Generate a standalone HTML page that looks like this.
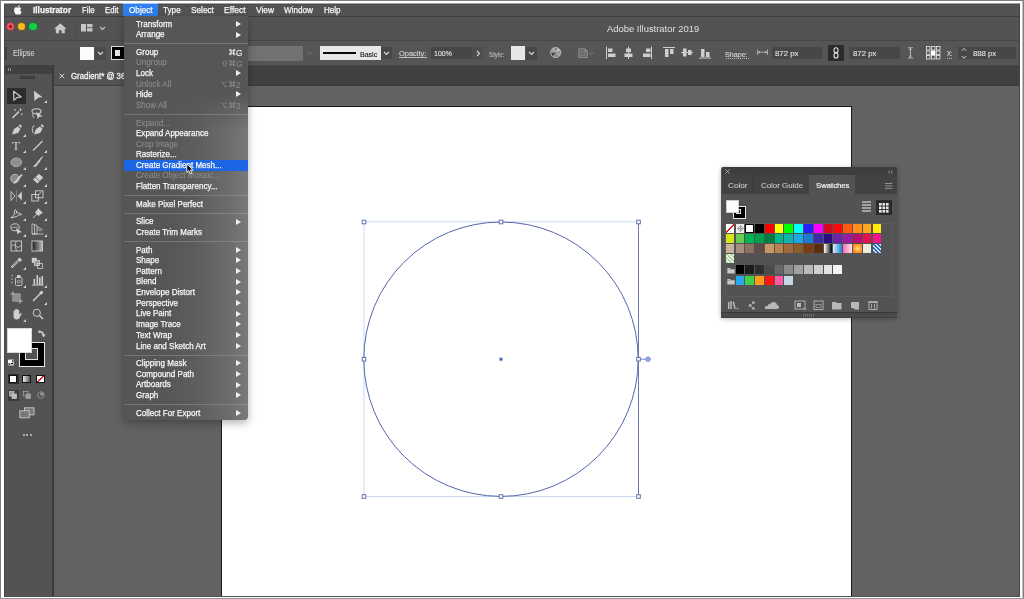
<!DOCTYPE html><html><head><meta charset="utf-8"><style>
*{box-sizing:border-box;margin:0;padding:0}
html,body{width:1024px;height:599px;overflow:hidden;background:#626262;font-family:"Liberation Sans",sans-serif;position:relative}
.a{position:absolute}
.t{position:absolute;white-space:nowrap;line-height:10px}
.mt{position:absolute;top:5px;font-size:8.4px;color:#f4f4f4;line-height:10px;white-space:nowrap;letter-spacing:-0.1px}
.mi{position:absolute;left:135.5px;font-size:8.3px;color:#f4f4f4;line-height:10px;white-space:nowrap;letter-spacing:-0.05px}
.mi.d{color:#8e8e8e}
.ar{position:absolute;left:236px;width:0;height:0;border-left:5px solid #f0f0f0;border-top:3px solid transparent;border-bottom:3px solid transparent}
.sc{position:absolute;right:782px;font-size:8px;line-height:10px;color:#f0f0f0;white-space:nowrap}
.sc.d{color:#8a8a8a}
.sep{position:absolute;left:124px;width:123.5px;height:1px;background:rgba(255,255,255,0.17)}
.sw{position:absolute;width:9px;height:9px}
svg{position:absolute;overflow:visible}
</style></head><body>
<div class="a" style="left:221px;top:106px;width:631px;height:493px;background:#fff;border-left:1px solid #1a1a1a;border-top:1px solid #1a1a1a;border-right:1px solid #1a1a1a"></div>
<svg style="left:0;top:0" width="1024" height="599">
<rect x="364" y="221.8" width="274.5" height="274.7" fill="none" stroke="#ccd9f0" stroke-width="1"/>
<line x1="638.5" y1="222" x2="638.5" y2="496.5" stroke="#6a78b8" stroke-width="1"/>
<circle cx="501" cy="359.2" r="137.2" fill="none" stroke="#5566b0" stroke-width="1"/>
<g fill="#fff" stroke="#6570b0" stroke-width="1">
<rect x="362.2" y="220.2" width="3.6" height="3.6"/><rect x="499.2" y="220.2" width="3.6" height="3.6"/><rect x="636.7" y="220.2" width="3.6" height="3.6"/>
<rect x="362.2" y="357.4" width="3.6" height="3.6"/><rect x="636.7" y="357.4" width="3.6" height="3.6"/>
<rect x="362.2" y="494.7" width="3.6" height="3.6"/><rect x="499.2" y="494.7" width="3.6" height="3.6"/><rect x="636.7" y="494.7" width="3.6" height="3.6"/>
</g>
<line x1="640.3" y1="359.2" x2="646" y2="359.2" stroke="#6a80d0" stroke-width="1"/>
<circle cx="648" cy="359.2" r="2.3" fill="#c8d4f8" stroke="#6a82d8" stroke-width="0.9"/><path d="M645.7 359.2 H650.3 M648 356.9 V361.5" stroke="#6a82d8" stroke-width="0.7"/>
<rect x="499.5" y="357.7" width="3" height="3" fill="#4a64c0"/>
</svg>
<div class="a" style="left:54px;top:65px;width:970px;height:21px;background:#404040;border-top:1px solid #474747;border-bottom:1px solid #3a3a3a"></div>
<div class="a" style="left:54px;top:65px;width:150px;height:20px;background:#535353"></div>
<div class="a" style="left:54px;top:85px;width:150px;height:1px;background:#434343"></div>
<svg style="left:59px;top:72.5px" width="6" height="6"><path d="M0.6 0.6 L5.2 5.2 M5.2 0.6 L0.6 5.2" stroke="#d8d8d8" stroke-width="1"/></svg>
<div class="t" style="left:70.80px;top:72.57px;font-size:8.2px;line-height:8.2px;color:#f2f2f2;transform-origin:0 0;transform:scaleX(0.960);-webkit-text-stroke:0.3px #f2f2f2;">Gradient* @ 36.65% (RGB/GPU Preview)</div>
<div class="a" style="left:4px;top:65px;width:48px;height:534px;background:#535353"></div>
<div class="a" style="left:4px;top:65px;width:48px;height:9px;background:#404040"></div>
<div class="a" style="left:52px;top:65px;width:2px;height:534px;background:#3b3b3b"></div>
<div class="a" style="left:8px;top:67.5px;width:0.8px;height:3.5px;background:#8a8a8a"></div><div class="a" style="left:10px;top:67.5px;width:0.8px;height:3.5px;background:#8a8a8a"></div>
<div class="a" style="left:20px;top:76px;width:14.5px;height:3px;border:0.8px solid #3a3a3a;background:repeating-linear-gradient(to right,#3a3a3a 0 1px,#505050 1px 2px)"></div>
<div class="a" style="left:7px;top:88px;width:19px;height:15.5px;background:#2d2d2d"></div>
<svg style="left:12px;top:90px" width="11" height="12"><path d="M1.6 1.3 L9.2 7 L5.3 7.4 L1.9 10.2 Z" fill="none" stroke="#cfcfcf" stroke-width="1.2" stroke-linejoin="round"/></svg>
<svg style="left:33px;top:90px" width="11" height="12"><path d="M1 0.8 L9.6 7.3 L5.5 7.6 L1.4 11 Z" fill="#cfcfcf"/></svg>
<svg style="left:44px;top:100px" width="3" height="3"><path d="M3 0V3H0Z" fill="#d0d0d0"/></svg>
<svg style="left:11px;top:108px" width="12" height="11"><path d="M1.5 10 L8 3.5" stroke="#cfcfcf" stroke-width="1.6"/><path d="M9.5 0.5v2.5M8.3 1.7h2.4M4 1v1.6M3.2 1.8h1.6M10.8 5.5v1.6M10 6.3h1.6" stroke="#cfcfcf" stroke-width="0.8"/></svg>
<svg style="left:31px;top:108px" width="13" height="11"><ellipse cx="5.5" cy="3.3" rx="4.5" ry="2.6" fill="none" stroke="#cfcfcf" stroke-width="1.1"/><path d="M5.2 3.8 L11.8 8.5 L8.5 8.7 L6.8 11 Z" fill="#cfcfcf"/><path d="M2 5.5 Q1 8 3 10" stroke="#cfcfcf" fill="none" stroke-width="0.9"/></svg>
<svg style="left:11px;top:124px" width="12" height="11"><path d="M1 10.5 L3 5 L7 2.5 L9.5 5 L7 9 Z" fill="#cfcfcf"/><path d="M7.5 1.5 L9 0.3 L11 2.3 L9.8 3.8Z" fill="#cfcfcf"/></svg>
<svg style="left:23px;top:134px" width="3" height="3"><path d="M3 0V3H0Z" fill="#d0d0d0"/></svg>
<svg style="left:31px;top:124px" width="13" height="11"><path d="M3 10.5 L5 5 L9 2.5 L11.5 5 L9 9 Z" fill="#cfcfcf"/><path d="M9.5 1.5 L11 0.3 L13 2.3 L11.8 3.8Z" fill="#cfcfcf"/><path d="M3 1 Q0 4 2 9" stroke="#cfcfcf" fill="none" stroke-width="0.9"/></svg>
<div class="t" style="left:11.5px;top:139px;font-family:'Liberation Serif',serif;font-size:13px;line-height:13px;color:#cfcfcf;will-change:transform">T</div>
<svg style="left:23px;top:150px" width="3" height="3"><path d="M3 0V3H0Z" fill="#d0d0d0"/></svg>
<svg style="left:32px;top:140px" width="11" height="11"><path d="M1 10.5 L10.5 1" stroke="#cfcfcf" stroke-width="1.2"/></svg>
<svg style="left:44px;top:150px" width="3" height="3"><path d="M3 0V3H0Z" fill="#d0d0d0"/></svg>
<svg style="left:10px;top:157px" width="13" height="11"><ellipse cx="6.3" cy="5.3" rx="5.3" ry="4.3" fill="#8e8e8e" stroke="#b5b5b5" stroke-width="0.9"/></svg>
<svg style="left:23px;top:167px" width="3" height="3"><path d="M3 0V3H0Z" fill="#d0d0d0"/></svg>
<svg style="left:32px;top:156px" width="11" height="12"><path d="M10.5 0.5 L5 6.5 L6.2 7.7 Z" fill="#cfcfcf" stroke="#cfcfcf" stroke-width="0.8"/><path d="M4.5 7 L6 8.5 Q4 11.5 0.8 11 Q2.5 9 4.5 7Z" fill="#cfcfcf"/></svg>
<svg style="left:44px;top:167px" width="3" height="3"><path d="M3 0V3H0Z" fill="#d0d0d0"/></svg>
<svg style="left:10px;top:173px" width="13" height="12"><circle cx="5" cy="5.5" r="4.2" fill="#8a8a8a" stroke="#bdbdbd" stroke-width="1"/><path d="M12 1.5 L4 10.5" stroke="#cfcfcf" stroke-width="1.8"/></svg>
<svg style="left:23px;top:184px" width="3" height="3"><path d="M3 0V3H0Z" fill="#d0d0d0"/></svg>
<svg style="left:32px;top:173px" width="12" height="11"><path d="M7 0.8 L11.2 4.5 L5.5 10.5 L1 6.6 Z" fill="#cfcfcf"/><path d="M3.2 4.3 L7.6 8.2" stroke="#535353" stroke-width="0.8"/></svg>
<svg style="left:44px;top:184px" width="3" height="3"><path d="M3 0V3H0Z" fill="#d0d0d0"/></svg>
<svg style="left:10px;top:190px" width="13" height="12"><path d="M1 1.5 L5 6 L1 10.5Z" fill="none" stroke="#cfcfcf" stroke-width="0.9"/><path d="M11.8 1.5 L7.8 6 L11.8 10.5Z" fill="#cfcfcf"/><path d="M6.4 0v12" stroke="#aaa" stroke-width="0.6"/></svg>
<svg style="left:23px;top:201px" width="3" height="3"><path d="M3 0V3H0Z" fill="#d0d0d0"/></svg>
<svg style="left:31px;top:190px" width="13" height="12"><rect x="4.5" y="0.8" width="7.5" height="7" fill="none" stroke="#cfcfcf" stroke-width="0.9"/><rect x="0.8" y="4.5" width="6.5" height="6.5" fill="none" stroke="#cfcfcf" stroke-width="0.9"/><path d="M7 5 L10.5 2" stroke="#cfcfcf" stroke-width="0.9"/></svg>
<svg style="left:44px;top:201px" width="3" height="3"><path d="M3 0V3H0Z" fill="#d0d0d0"/></svg>
<svg style="left:10px;top:207px" width="13" height="12"><path d="M1 11 Q3 8 5 7 Q3 4 5.5 2.5 Q7 4 6.5 6 Q9 5 11.5 7.5 Q8 8 6.5 9.5 Q4 10 1 11Z" fill="none" stroke="#cfcfcf" stroke-width="1"/></svg>
<svg style="left:23px;top:218px" width="3" height="3"><path d="M3 0V3H0Z" fill="#d0d0d0"/></svg>
<svg style="left:32px;top:207px" width="12" height="12"><path d="M6 1 L11 6 L9.5 6.5 L6.5 9 L5.5 8 L3 5.5 L5.5 2.5Z" fill="#cfcfcf"/><path d="M5 7 L1 11" stroke="#cfcfcf" stroke-width="0.9"/></svg>
<svg style="left:44px;top:218px" width="3" height="3"><path d="M3 0V3H0Z" fill="#d0d0d0"/></svg>
<svg style="left:10px;top:223px" width="13" height="12"><ellipse cx="5" cy="4.3" rx="4.3" ry="3.5" fill="none" stroke="#cfcfcf" stroke-width="0.9"/><path d="M1.5 4.5 L8.5 4" stroke="#cfcfcf" stroke-width="0.7"/><path d="M6 5 L12.2 9.3 L9.2 9.6 L7.6 11.8Z" fill="#cfcfcf"/></svg>
<svg style="left:23px;top:234px" width="3" height="3"><path d="M3 0V3H0Z" fill="#d0d0d0"/></svg>
<svg style="left:31px;top:223px" width="13" height="12"><path d="M1 0.8 L6 2.5 V11 H1Z M1 11 H12.5 M6 3.5 L12 7 M6 6 L10 8 M3.5 1.5 V11" fill="none" stroke="#cfcfcf" stroke-width="0.8"/></svg>
<svg style="left:44px;top:234px" width="3" height="3"><path d="M3 0V3H0Z" fill="#d0d0d0"/></svg>
<svg style="left:10px;top:240px" width="13" height="12"><rect x="1" y="1" width="10.5" height="10" fill="none" stroke="#cfcfcf" stroke-width="0.9"/><path d="M1 6 Q4 3 6 6 T11.5 5 M6 1 Q4 6 6.5 11" fill="none" stroke="#cfcfcf" stroke-width="0.8"/></svg>
<svg style="left:31px;top:240px" width="13" height="12"><defs><linearGradient id="gt" x1="0" x2="1"><stop offset="0" stop-color="#1a1a1a"/><stop offset="1" stop-color="#bdbdbd"/></linearGradient></defs><rect x="1" y="1" width="10.5" height="10" fill="url(#gt)" stroke="#cfcfcf" stroke-width="0.9"/></svg>
<svg style="left:10px;top:257px" width="13" height="12"><path d="M1.5 10.5 L8 4" stroke="#cfcfcf" stroke-width="2.2" fill="none"/><path d="M8.5 1.5 L11 4" stroke="#cfcfcf" stroke-width="3"/><path d="M2.5 9.5 L7.5 4.5" stroke="#535353" stroke-width="0.8"/></svg>
<svg style="left:23px;top:267px" width="3" height="3"><path d="M3 0V3H0Z" fill="#d0d0d0"/></svg>
<svg style="left:31px;top:257px" width="13" height="12"><rect x="0.8" y="0.8" width="5" height="5" fill="#cfcfcf"/><rect x="3.5" y="3.5" width="5" height="5" fill="#9a9a9a" stroke="#cfcfcf" stroke-width="0.8"/><rect x="6.5" y="6.5" width="5" height="5" fill="none" stroke="#cfcfcf" stroke-width="0.8"/></svg>
<svg style="left:10px;top:273px" width="13" height="13"><rect x="5.5" y="4.5" width="6.5" height="8" rx="1" fill="none" stroke="#cfcfcf" stroke-width="0.9"/><rect x="7" y="2" width="3.5" height="2.5" fill="#cfcfcf"/><path d="M1 2.5h2M2 1.5v2M1 6h2M2 5v2M1 9.5h2M2 8.5v2" stroke="#b0b0b0" stroke-width="0.6"/><circle cx="8.7" cy="8.7" r="1.5" fill="none" stroke="#cfcfcf" stroke-width="0.7"/></svg>
<svg style="left:23px;top:285px" width="3" height="3"><path d="M3 0V3H0Z" fill="#d0d0d0"/></svg>
<svg style="left:31px;top:273px" width="13" height="13"><path d="M1 12.2 H12.5" stroke="#cfcfcf" stroke-width="0.8"/><rect x="2.5" y="6" width="1.6" height="6" fill="#cfcfcf"/><rect x="5.5" y="2" width="1.6" height="10" fill="#cfcfcf"/><rect x="8" y="4.5" width="1.6" height="7.5" fill="#cfcfcf"/><rect x="10.5" y="3" width="1.6" height="9" fill="#cfcfcf"/></svg>
<svg style="left:44px;top:285px" width="3" height="3"><path d="M3 0V3H0Z" fill="#d0d0d0"/></svg>
<svg style="left:10px;top:291px" width="13" height="13"><path d="M3 0.5 V10 H12.5 M0.5 3 H10 V12.5" fill="none" stroke="#cfcfcf" stroke-width="0.9"/><rect x="3.5" y="3.5" width="6" height="6" fill="#8f8f8f"/></svg>
<svg style="left:32px;top:290px" width="12" height="12"><path d="M1 11 L8 4" stroke="#cfcfcf" stroke-width="1.5"/><path d="M7 3 L9.5 0.5 L11.5 2.5 L9 5Z" fill="#cfcfcf"/></svg>
<svg style="left:44px;top:302px" width="3" height="3"><path d="M3 0V3H0Z" fill="#d0d0d0"/></svg>
<svg style="left:11px;top:308px" width="12" height="12"><path d="M2.5 6 V3 Q3.2 2.2 3.8 3 V6 V1.5 Q4.5 0.8 5.2 1.5 V6 V1.2 Q6 0.5 6.7 1.2 V6 V2 Q7.5 1.3 8.2 2 V7 L9.5 5.2 Q10.5 4.8 10.8 5.6 L8.5 10 Q7.5 11.5 5.5 11.5 Q3 11.5 2.5 9Z" fill="#cfcfcf"/></svg>
<svg style="left:23px;top:319px" width="3" height="3"><path d="M3 0V3H0Z" fill="#d0d0d0"/></svg>
<svg style="left:32px;top:308px" width="12" height="12"><circle cx="4.8" cy="4.8" r="3.6" fill="none" stroke="#cfcfcf" stroke-width="1"/><path d="M7.5 7.5 L11 11" stroke="#cfcfcf" stroke-width="1.4"/></svg>
<div class="a" style="left:19px;top:341.5px;width:25.5px;height:25px;background:#000;border:1px solid #e8e8e8"></div>
<div class="a" style="left:25.3px;top:348px;width:12.5px;height:12px;background:#505050;border:1px solid #e0e0e0"></div>
<div class="a" style="left:7px;top:328px;width:24.5px;height:24.5px;background:#fff;border:1px solid #d8d8d8"></div>
<svg style="left:38px;top:329.5px" width="8" height="8"><path d="M1.2 1.8 Q5 1.5 5.6 5" fill="none" stroke="#cfcfcf" stroke-width="1.5"/><path d="M3.6 4.6 L5.6 7.4 L7.6 4.6Z" fill="#cfcfcf"/><circle cx="1.5" cy="1.8" r="1.3" fill="#cfcfcf"/></svg>
<div class="a" style="left:7.5px;top:358.6px;width:6.5px;height:7px;border:0.8px solid #999;border-radius:1px"></div><div class="a" style="left:9.5px;top:361.5px;width:4px;height:3.5px;background:#000;border:0.7px solid #ccc"></div><div class="a" style="left:8.3px;top:359.5px;width:3.4px;height:3.2px;background:#fff"></div>
<div class="a" style="left:7.5px;top:373.5px;width:11px;height:10px;background:#2f2f2f"></div>
<div class="a" style="left:9px;top:375px;width:8px;height:7.5px;background:#fff;border:1px solid #111"></div>
<div class="a" style="left:22.3px;top:375px;width:8.5px;height:7.5px;background:linear-gradient(to right,#f0f0f0,#555);border:1px solid #111"></div>
<div class="a" style="left:36.3px;top:375px;width:8.5px;height:7.5px;background:linear-gradient(135deg,#fff 40%,#e01a1a 40%,#e01a1a 60%,#fff 60%);border:1px solid #111"></div>
<div class="a" style="left:7.5px;top:389.5px;width:11px;height:11px;background:#3a3a3a"></div>
<svg style="left:9px;top:391px" width="8" height="8"><rect x="0.5" y="0.5" width="4.5" height="4.5" fill="#999" stroke="#ccc" stroke-width="0.7"/><rect x="3" y="3" width="4.5" height="4.5" fill="#bbb" stroke="#ccc" stroke-width="0.7"/></svg>
<svg style="left:23px;top:391px" width="8" height="8"><rect x="0.5" y="0.5" width="4.5" height="4.5" fill="none" stroke="#aaa" stroke-width="0.7"/><rect x="3" y="3" width="4.5" height="4.5" fill="#999" stroke="#aaa" stroke-width="0.7"/></svg>
<svg style="left:37px;top:391px" width="8" height="8"><circle cx="4" cy="4" r="3.3" fill="none" stroke="#999" stroke-width="0.8"/><rect x="3.3" y="1.5" width="3" height="3" fill="#999"/></svg>
<svg style="left:19px;top:407px" width="16" height="12"><rect x="5.5" y="0.8" width="9.5" height="7" fill="#777" stroke="#c8c8c8" stroke-width="0.9"/><rect x="0.8" y="3.8" width="9.5" height="7" fill="#777" stroke="#c8c8c8" stroke-width="0.9"/></svg>
<div class="a" style="left:22.5px;top:434px;width:2px;height:2px;background:#c8c8c8;border-radius:1px"></div><div class="a" style="left:26px;top:434px;width:2px;height:2px;background:#c8c8c8;border-radius:1px"></div><div class="a" style="left:29.5px;top:434px;width:2px;height:2px;background:#c8c8c8;border-radius:1px"></div>
<div class="a" style="left:0;top:40px;width:1024px;height:1px;background:#474747"></div>
<div class="a" style="left:0;top:41px;width:1024px;height:24px;background:#555555"></div>
<div class="a" style="left:5px;top:46.5px;width:2px;height:13px;background:repeating-linear-gradient(to bottom,#3a3a3a 0 1px,#464646 1px 2px)"></div>
<div class="t" style="left:12.70px;top:50.47px;font-size:8.2px;line-height:8.2px;color:#d0d0d0;transform-origin:0 0;transform:scaleX(0.891);-webkit-text-stroke:0.1px #d0d0d0;">Ellipse</div>
<div class="a" style="left:80px;top:46.5px;width:14px;height:13.5px;background:#fbfbfb"></div>
<div class="a" style="left:94.5px;top:47px;width:11px;height:13px;background:#4c4c4c"></div>
<svg style="left:96.5px;top:51px" width="7" height="5"><path d="M1 1 L3.5 3.5 L6 1" fill="none" stroke="#d8d8d8" stroke-width="1.1"/></svg>
<div class="a" style="left:110.5px;top:46.3px;width:14px;height:13.7px;background:#000;border:1px solid #e0e0e0"></div>
<div class="a" style="left:115px;top:50px;width:5px;height:5.5px;background:#e8e8e8"></div>
<div class="a" style="left:248px;top:45.8px;width:54.5px;height:15.2px;background:#727272"></div>
<svg style="left:305.5px;top:51px" width="7" height="5"><path d="M1 1 L3.5 3.5 L6 1" fill="none" stroke="#6e6e6e" stroke-width="1.1"/></svg>
<div class="a" style="left:320px;top:46px;width:60.6px;height:14px;background:#e8e8e8"></div>
<div class="a" style="left:323px;top:52px;width:33.2px;height:2px;background:#0a0a0a"></div>
<div class="t" style="left:359.80px;top:50.67px;font-size:7.5px;line-height:7.5px;color:#111;transform-origin:0 0;transform:scaleX(0.938);-webkit-text-stroke:0.1px #111;">Basic</div>
<div class="a" style="left:381px;top:46.8px;width:11.3px;height:12.7px;background:#474747"></div>
<svg style="left:383.3px;top:51px" width="7" height="5"><path d="M1 1 L3.5 3.5 L6 1" fill="none" stroke="#d8d8d8" stroke-width="1.1"/></svg>
<div class="t" style="left:398.80px;top:50.45px;font-size:7.7px;line-height:7.7px;color:#d8d8d8;transform-origin:0 0;transform:scaleX(0.972);-webkit-text-stroke:0.1px #d8d8d8;">Opacity:</div>
<div class="a" style="left:398.5px;top:57px;width:28px;height:0.8px;background:#bdbdbd"></div>
<div class="a" style="left:430.7px;top:47.4px;width:41px;height:11.6px;background:#474747"></div>
<div class="t" style="left:433.50px;top:50.45px;font-size:7.7px;line-height:7.7px;color:#e8e8e8;transform-origin:0 0;transform:scaleX(0.910);-webkit-text-stroke:0.1px #e8e8e8;">100%</div>
<div class="a" style="left:472px;top:47.4px;width:10.5px;height:11.6px;background:#4d4d4d"></div>
<svg style="left:475.5px;top:50px" width="5" height="7"><path d="M1 1 L3.5 3.5 L1 6" fill="none" stroke="#d8d8d8" stroke-width="1.1"/></svg>
<div class="t" style="left:488.70px;top:50.79px;font-size:7.4px;line-height:7.4px;color:#bdbdbd;transform-origin:0 0;transform:scaleX(0.839);-webkit-text-stroke:0.1px #bdbdbd;">Style:</div>
<div class="a" style="left:510.8px;top:46.2px;width:14.1px;height:13.7px;background:#e6e6e6"></div>
<div class="a" style="left:525.5px;top:47px;width:11.3px;height:13px;background:#474747"></div>
<svg style="left:527.7px;top:51px" width="7" height="5"><path d="M1 1 L3.5 3.5 L6 1" fill="none" stroke="#d8d8d8" stroke-width="1.1"/></svg>
<svg style="left:549.5px;top:47px" width="12" height="12"><circle cx="5.7" cy="5.5" r="5.1" fill="#8c8c8c" stroke="#bdbdbd" stroke-width="0.9"/><path d="M5.7 5.5 L2.5 9 L1.2 6.5Z" fill="#3a3a3a"/><path d="M5.7 5.5 L8 1.2 L10.3 3.5Z" fill="#c8c8c8"/><path d="M5.7 5.5 L10.6 6.5 L9 9.2Z" fill="#a8a8a8"/><path d="M5.7 5.5 L4 0.8 L1.5 3Z" fill="#b0b0b0"/></svg>
<svg style="left:578px;top:48px" width="17" height="11"><path d="M0.8 0.8 H7 L9.5 3.3 V9.5 H0.8Z" fill="#6a6a6a" stroke="#8e8e8e" stroke-width="0.9"/><path d="M7 0.8 V3.3 H9.5" fill="#9a9a9a" stroke="#8e8e8e" stroke-width="0.6"/><rect x="3" y="3.5" width="4" height="4" fill="none" stroke="#858585" stroke-width="0.7"/><path d="M11.5 4.6 L13.3 6.2 L15.1 4.6" fill="none" stroke="#8a8a8a" stroke-width="0.9"/></svg>
<svg style="left:605.4px;top:46px" width="110" height="14">
<path d="M1.5 0.5 V13" stroke="#cfcfcf" stroke-width="1"/><rect x="3" y="2.5" width="4.5" height="3.5" fill="#cfcfcf"/><rect x="3" y="7.5" width="7.5" height="3.5" fill="#cfcfcf"/>
<path d="M23.5 0.5 V13" stroke="#cfcfcf" stroke-width="1"/><rect x="21" y="2.5" width="5" height="3.5" fill="#cfcfcf"/><rect x="19.5" y="7.5" width="8" height="3.5" fill="#cfcfcf"/>
<path d="M46.5 0.5 V13" stroke="#cfcfcf" stroke-width="1"/><rect x="41" y="2.5" width="4.5" height="3.5" fill="#cfcfcf"/><rect x="38" y="7.5" width="7.5" height="3.5" fill="#cfcfcf"/>
<path d="M58 1.5 H70" stroke="#cfcfcf" stroke-width="1"/><rect x="60" y="3" width="3.5" height="8" fill="#cfcfcf"/><rect x="65" y="3" width="3.5" height="5" fill="#cfcfcf"/>
<path d="M76 6.5 H88" stroke="#cfcfcf" stroke-width="1"/><rect x="78" y="2.5" width="3.5" height="8" fill="#cfcfcf"/><rect x="83" y="4" width="3.5" height="5" fill="#cfcfcf"/>
<path d="M94 12 H106" stroke="#cfcfcf" stroke-width="1"/><rect x="96" y="3" width="3.5" height="8" fill="#cfcfcf"/><rect x="101" y="6" width="3.5" height="5" fill="#cfcfcf"/>
</svg>
<div class="t" style="left:725.40px;top:50.57px;font-size:7.5px;line-height:7.5px;color:#dcdcdc;transform-origin:0 0;transform:scaleX(0.950);-webkit-text-stroke:0.1px #dcdcdc;">Shape:</div>
<div class="a" style="left:725.5px;top:57.5px;width:23px;height:1px;background:repeating-linear-gradient(to right,#bbb 0 1px,transparent 1px 2px)"></div>
<svg style="left:757px;top:49px" width="11" height="7"><path d="M0.5 0.5 V6 M10.5 0.5 V6 M1 3.2 H10" stroke="#c0c0c0" stroke-width="0.8"/><path d="M1 3.2 L3 1.8 V4.6Z M10 3.2 L8 1.8 V4.6Z" fill="#c0c0c0"/></svg>
<div class="a" style="left:771.5px;top:47.4px;width:50.5px;height:11.6px;background:#474747"></div>
<div class="t" style="left:774.70px;top:49.99px;font-size:7.4px;line-height:7.4px;color:#e4e4e4;transform-origin:0 0;transform:scaleX(1.054);-webkit-text-stroke:0.1px #e4e4e4;">872 px</div>
<div class="a" style="left:828.3px;top:44.8px;width:15.7px;height:16.2px;background:#2b2b2b"></div>
<svg style="left:832px;top:47px" width="8" height="12"><rect x="2" y="0.8" width="4" height="5" rx="2" fill="none" stroke="#e6e6e6" stroke-width="1.1"/><rect x="2" y="6" width="4" height="5" rx="2" fill="none" stroke="#e6e6e6" stroke-width="1.1"/></svg>
<div class="a" style="left:849.4px;top:47.4px;width:50.8px;height:11.6px;background:#474747"></div>
<div class="t" style="left:852.50px;top:49.99px;font-size:7.4px;line-height:7.4px;color:#e4e4e4;transform-origin:0 0;transform:scaleX(1.054);-webkit-text-stroke:0.1px #e4e4e4;">872 px</div>
<svg style="left:907px;top:47px" width="7" height="12"><path d="M0.8 0.8 H6 M0.8 11 H6 M3.4 1 V10.8" stroke="#c0c0c0" stroke-width="0.9"/><path d="M3.4 1 L2 3 H4.8Z M3.4 10.8 L2 8.8 H4.8Z" fill="#c0c0c0"/></svg>
<svg style="left:925.5px;top:46px" width="15" height="14"><g fill="none" stroke="#e8e8e8" stroke-width="0.8"><rect x="0.5" y="0.5" width="3.5" height="3.5"/><rect x="5.5" y="0.5" width="3.5" height="3.5"/><rect x="10.5" y="0.5" width="3.5" height="3.5"/><rect x="0.5" y="5" width="3.5" height="3.5"/><rect x="10.5" y="5" width="3.5" height="3.5"/><rect x="0.5" y="9.5" width="3.5" height="3.5"/><rect x="5.5" y="9.5" width="3.5" height="3.5"/><rect x="10.5" y="9.5" width="3.5" height="3.5"/></g><rect x="5" y="4.5" width="4.5" height="4.5" fill="#fff"/></svg>
<div class="t" style="left:947.00px;top:50.30px;font-size:7.3px;line-height:7.3px;color:#e4e4e4;transform-origin:0 0;transform:scaleX(0.796);-webkit-text-stroke:0.1px #e4e4e4;">X:</div>
<div class="a" style="left:946.5px;top:57.5px;width:6px;height:1px;background:repeating-linear-gradient(to right,#bbb 0 1px,transparent 1px 2px)"></div>
<div class="a" style="left:958.4px;top:47.4px;width:57.6px;height:11.6px;background:#474747"></div>
<svg style="left:961px;top:47px" width="6" height="13"><path d="M0.8 3.8 L3 1.5 L5.2 3.8 M0.8 9 L3 11.3 L5.2 9" fill="none" stroke="#d8d8d8" stroke-width="0.9"/></svg>
<div class="t" style="left:972.80px;top:49.99px;font-size:7.4px;line-height:7.4px;color:#e4e4e4;transform-origin:0 0;transform:scaleX(1.045);-webkit-text-stroke:0.1px #e4e4e4;">888 px</div>
<div class="a" style="left:0;top:16px;width:1024px;height:1px;background:#3f3f3f"></div>
<div class="a" style="left:0;top:17px;width:1024px;height:23px;background:#535353"></div>
<div class="a" style="left:6.7px;top:22.7px;width:7.4px;height:7.4px;border-radius:50%;background:#ee5864;box-shadow:0 0 0 0.6px #b83040"></div><div class="a" style="left:8.9px;top:24.9px;width:3px;height:3px;border-radius:50%;background:#900a14"></div>
<div class="a" style="left:17.8px;top:22.7px;width:7.4px;height:7.4px;border-radius:50%;background:#f8bc1c;box-shadow:0 0 0 0.7px #8a6210"></div>
<div class="a" style="left:29.2px;top:22.7px;width:7.4px;height:7.4px;border-radius:50%;background:#14d048;box-shadow:0 0 0 0.7px #0e7a2a"></div>
<svg style="left:54px;top:23px" width="13" height="11"><path d="M6.3 0.3 L12.5 5.8 H10.8 V10.3 H7.6 V7.3 H5 V10.3 H1.8 V5.8 H0.1Z" fill="#c6c6c6"/></svg>
<div class="a" style="left:74.5px;top:20px;width:1px;height:17px;background:#4c4c4c"></div>
<svg style="left:81px;top:24px" width="12" height="8"><rect x="0" y="0" width="5" height="7.5" fill="#c6c6c6"/><rect x="6" y="0" width="5.5" height="3.3" fill="#c6c6c6"/><rect x="6" y="4.2" width="5.5" height="3.3" fill="#c6c6c6"/></svg>
<svg style="left:98.5px;top:25.5px" width="7" height="5"><path d="M1 1 L3.5 3.5 L6 1" fill="none" stroke="#c6c6c6" stroke-width="1.1"/></svg>
<div class="t" style="left:606.90px;top:23.84px;font-size:9.7px;line-height:9.7px;color:#dcdcdc;transform-origin:0 0;transform:scaleX(0.972);-webkit-text-stroke:0.05px #dcdcdc;">Adobe Illustrator 2019</div>
<div class="a" style="left:0;top:0;width:1024px;height:16px;background:#535353"></div>
<div class="a" style="left:123.2px;top:4px;width:34.8px;height:12px;background:#2c7ff0"></div>
<svg style="left:13.6px;top:4.8px" width="7.6" height="9.6" viewBox="2 0 20 24" preserveAspectRatio="none"><path d="M12.152 6.896c-.948 0-2.415-1.078-3.960-1.040-2.040.027-3.910 1.183-4.961 3.014-2.117 3.675-.546 9.103 1.519 12.090 1.013 1.454 2.208 3.090 3.792 3.039 1.520-.065 2.090-.987 3.935-.987 1.831 0 2.350.987 3.960.948 1.637-.026 2.676-1.480 3.676-2.948 1.156-1.688 1.636-3.325 1.662-3.415-.039-.013-3.182-1.221-3.220-4.857-.026-3.040 2.480-4.494 2.597-4.559-1.429-2.090-3.623-2.324-4.390-2.376-2-.156-3.675 1.090-4.610 1.090zM15.530 3.830c.843-1.012 1.400-2.427 1.245-3.830-1.207.052-2.662.805-3.532 1.818-.780.896-1.454 2.338-1.273 3.714 1.338.104 2.715-.688 3.559-1.701" fill="#fafafa"/></svg>
<div class="t" style="left:32.90px;top:6.07px;font-size:8.9px;line-height:8.9px;color:#f8f8f8;font-weight:bold;transform-origin:0 0;transform:scaleX(0.931);-webkit-text-stroke:0.25px #f8f8f8;">Illustrator</div>
<div class="t" style="left:81.70px;top:6.07px;font-size:8.9px;line-height:8.9px;color:#f8f8f8;transform-origin:0 0;transform:scaleX(0.887);-webkit-text-stroke:0.25px #f8f8f8;">File</div>
<div class="t" style="left:104.70px;top:6.07px;font-size:8.9px;line-height:8.9px;color:#f8f8f8;transform-origin:0 0;transform:scaleX(0.869);-webkit-text-stroke:0.25px #f8f8f8;">Edit</div>
<div class="t" style="left:129.20px;top:6.07px;font-size:8.9px;line-height:8.9px;color:#f8f8f8;transform-origin:0 0;transform:scaleX(0.920);-webkit-text-stroke:0.25px #f8f8f8;">Object</div>
<div class="t" style="left:163.00px;top:6.07px;font-size:8.9px;line-height:8.9px;color:#f8f8f8;transform-origin:0 0;transform:scaleX(0.919);-webkit-text-stroke:0.25px #f8f8f8;">Type</div>
<div class="t" style="left:190.90px;top:6.07px;font-size:8.9px;line-height:8.9px;color:#f8f8f8;transform-origin:0 0;transform:scaleX(0.928);-webkit-text-stroke:0.25px #f8f8f8;">Select</div>
<div class="t" style="left:224.40px;top:6.07px;font-size:8.9px;line-height:8.9px;color:#f8f8f8;transform-origin:0 0;transform:scaleX(0.959);-webkit-text-stroke:0.25px #f8f8f8;">Effect</div>
<div class="t" style="left:256.00px;top:6.07px;font-size:8.9px;line-height:8.9px;color:#f8f8f8;transform-origin:0 0;transform:scaleX(0.943);-webkit-text-stroke:0.25px #f8f8f8;">View</div>
<div class="t" style="left:284.00px;top:6.07px;font-size:8.9px;line-height:8.9px;color:#f8f8f8;transform-origin:0 0;transform:scaleX(0.918);-webkit-text-stroke:0.25px #f8f8f8;">Window</div>
<div class="t" style="left:323.50px;top:6.07px;font-size:8.9px;line-height:8.9px;color:#f8f8f8;transform-origin:0 0;transform:scaleX(0.903);-webkit-text-stroke:0.25px #f8f8f8;">Help</div>
<div class="a" style="left:124px;top:16px;width:124px;height:404px;background:#565656;border-radius:0 0 4px 4px;overflow:hidden;box-shadow:0 3px 8px rgba(0,0,0,0.3)"><div class="a" style="left:40px;top:75px;width:84px;height:329px;background:linear-gradient(to right,rgba(255,255,255,0) 0%,rgba(255,255,255,0.05) 40%,rgba(255,255,255,0.13) 75%,rgba(255,255,255,0.21) 100%);-webkit-mask-image:linear-gradient(to bottom,transparent 0,#000 40px)"></div></div>
<div class="a" style="left:124px;top:159.5px;width:123.5px;height:11.5px;background:#1c66e6"></div>
<div class="t" style="left:135.90px;top:19.79px;font-size:8.7px;line-height:8.7px;color:#f8f8f8;transform-origin:0 0;transform:scaleX(0.925);-webkit-text-stroke:0.25px #f8f8f8;">Transform</div>
<div class="ar" style="top:21px"></div>
<div class="t" style="left:135.90px;top:30.39px;font-size:8.7px;line-height:8.7px;color:#f8f8f8;transform-origin:0 0;transform:scaleX(0.925);-webkit-text-stroke:0.25px #f8f8f8;">Arrange</div>
<div class="ar" style="top:31.6px"></div>
<div class="sep" style="top:43.1px"></div>
<div class="t" style="left:135.90px;top:47.80px;font-size:8.7px;line-height:8.7px;color:#f8f8f8;transform-origin:0 0;transform:scaleX(0.925);-webkit-text-stroke:0.25px #f8f8f8;">Group</div>
<svg style="left:220px;top:49px" width="24" height="7"><g transform="translate(9.3,0.1)"><path d="M1.8 0.9 V5.1 M4.2 0.9 V5.1 M0.9 1.8 H5.1 M0.9 4.2 H5.1" stroke="#f2f2f2" stroke-width="0.8" fill="none"/><g fill="none" stroke="#f2f2f2" stroke-width="0.8"><circle cx="1" cy="1" r="0.85"/><circle cx="5" cy="1" r="0.85"/><circle cx="1" cy="5" r="0.85"/><circle cx="5" cy="5" r="0.85"/></g></g></svg>
<div class="t" style="left:236.00px;top:48.95px;font-size:8.3px;line-height:8.3px;color:#f2f2f2;transform-origin:0 0;transform:scaleX(0.998);-webkit-text-stroke:0.15px #f2f2f2;">G</div>
<div class="t" style="left:135.90px;top:58.40px;font-size:8.7px;line-height:8.7px;color:#8c8c8c;transform-origin:0 0;transform:scaleX(0.925);-webkit-text-stroke:0.1px #8c8c8c;">Ungroup</div>
<svg style="left:220px;top:59.6px" width="24" height="7"><g transform="translate(1.8,0.1)"><path d="M3 0.4 L5.6 3.1 H4.1 V5.6 H1.9 V3.1 H0.4Z" stroke="#8a8a8a" stroke-width="0.75" fill="none" stroke-linejoin="round"/></g><g transform="translate(9.3,0.1)"><path d="M1.8 0.9 V5.1 M4.2 0.9 V5.1 M0.9 1.8 H5.1 M0.9 4.2 H5.1" stroke="#8a8a8a" stroke-width="0.8" fill="none"/><g fill="none" stroke="#8a8a8a" stroke-width="0.8"><circle cx="1" cy="1" r="0.85"/><circle cx="5" cy="1" r="0.85"/><circle cx="1" cy="5" r="0.85"/><circle cx="5" cy="5" r="0.85"/></g></g></svg>
<div class="t" style="left:236.00px;top:59.55px;font-size:8.3px;line-height:8.3px;color:#8a8a8a;transform-origin:0 0;transform:scaleX(0.998);-webkit-text-stroke:0.05px #8a8a8a;">G</div>
<div class="t" style="left:135.90px;top:68.80px;font-size:8.7px;line-height:8.7px;color:#f8f8f8;transform-origin:0 0;transform:scaleX(0.925);-webkit-text-stroke:0.25px #f8f8f8;">Lock</div>
<div class="ar" style="top:70px"></div>
<div class="t" style="left:135.90px;top:79.80px;font-size:8.7px;line-height:8.7px;color:#8c8c8c;transform-origin:0 0;transform:scaleX(0.925);-webkit-text-stroke:0.1px #8c8c8c;">Unlock All</div>
<svg style="left:220px;top:81px" width="24" height="7"><g transform="translate(0.8,0.2)"><path d="M0.2 1 H2.1 L4 5.4 H6.2 M3.9 1 H6.2" stroke="#8a8a8a" stroke-width="0.8" fill="none"/></g><g transform="translate(9.3,0.1)"><path d="M1.8 0.9 V5.1 M4.2 0.9 V5.1 M0.9 1.8 H5.1 M0.9 4.2 H5.1" stroke="#8a8a8a" stroke-width="0.8" fill="none"/><g fill="none" stroke="#8a8a8a" stroke-width="0.8"><circle cx="1" cy="1" r="0.85"/><circle cx="5" cy="1" r="0.85"/><circle cx="1" cy="5" r="0.85"/><circle cx="5" cy="5" r="0.85"/></g></g></svg>
<div class="t" style="left:236.00px;top:80.95px;font-size:8.3px;line-height:8.3px;color:#8a8a8a;transform-origin:0 0;transform:scaleX(0.998);-webkit-text-stroke:0.05px #8a8a8a;">2</div>
<div class="t" style="left:135.90px;top:90.20px;font-size:8.7px;line-height:8.7px;color:#f8f8f8;transform-origin:0 0;transform:scaleX(0.925);-webkit-text-stroke:0.25px #f8f8f8;">Hide</div>
<div class="ar" style="top:91.4px"></div>
<div class="t" style="left:135.90px;top:100.80px;font-size:8.7px;line-height:8.7px;color:#8c8c8c;transform-origin:0 0;transform:scaleX(0.925);-webkit-text-stroke:0.1px #8c8c8c;">Show All</div>
<svg style="left:220px;top:102px" width="24" height="7"><g transform="translate(0.8,0.2)"><path d="M0.2 1 H2.1 L4 5.4 H6.2 M3.9 1 H6.2" stroke="#8a8a8a" stroke-width="0.8" fill="none"/></g><g transform="translate(9.3,0.1)"><path d="M1.8 0.9 V5.1 M4.2 0.9 V5.1 M0.9 1.8 H5.1 M0.9 4.2 H5.1" stroke="#8a8a8a" stroke-width="0.8" fill="none"/><g fill="none" stroke="#8a8a8a" stroke-width="0.8"><circle cx="1" cy="1" r="0.85"/><circle cx="5" cy="1" r="0.85"/><circle cx="1" cy="5" r="0.85"/><circle cx="5" cy="5" r="0.85"/></g></g></svg>
<div class="t" style="left:236.00px;top:101.95px;font-size:8.3px;line-height:8.3px;color:#8a8a8a;transform-origin:0 0;transform:scaleX(0.998);-webkit-text-stroke:0.05px #8a8a8a;">3</div>
<div class="sep" style="top:113.5px"></div>
<div class="t" style="left:135.90px;top:118.80px;font-size:8.7px;line-height:8.7px;color:#8c8c8c;transform-origin:0 0;transform:scaleX(0.925);-webkit-text-stroke:0.1px #8c8c8c;">Expand...</div>
<div class="t" style="left:135.90px;top:129.19px;font-size:8.7px;line-height:8.7px;color:#f8f8f8;transform-origin:0 0;transform:scaleX(0.925);-webkit-text-stroke:0.25px #f8f8f8;">Expand Appearance</div>
<div class="t" style="left:135.90px;top:139.79px;font-size:8.7px;line-height:8.7px;color:#8c8c8c;transform-origin:0 0;transform:scaleX(0.925);-webkit-text-stroke:0.1px #8c8c8c;">Crop Image</div>
<div class="t" style="left:135.90px;top:150.39px;font-size:8.7px;line-height:8.7px;color:#f8f8f8;transform-origin:0 0;transform:scaleX(0.925);-webkit-text-stroke:0.25px #f8f8f8;">Rasterize...</div>
<div class="t" style="left:135.90px;top:160.79px;font-size:8.7px;line-height:8.7px;color:#f8f8f8;transform-origin:0 0;transform:scaleX(0.925);-webkit-text-stroke:0.25px #f8f8f8;">Create Gradient Mesh...</div>
<div class="t" style="left:135.90px;top:171.39px;font-size:8.7px;line-height:8.7px;color:#8c8c8c;transform-origin:0 0;transform:scaleX(0.925);-webkit-text-stroke:0.1px #8c8c8c;">Create Object Mosaic...</div>
<div class="t" style="left:135.90px;top:182.19px;font-size:8.7px;line-height:8.7px;color:#f8f8f8;transform-origin:0 0;transform:scaleX(0.925);-webkit-text-stroke:0.25px #f8f8f8;">Flatten Transparency...</div>
<div class="sep" style="top:195.1px"></div>
<div class="t" style="left:135.90px;top:199.79px;font-size:8.7px;line-height:8.7px;color:#f8f8f8;transform-origin:0 0;transform:scaleX(0.925);-webkit-text-stroke:0.25px #f8f8f8;">Make Pixel Perfect</div>
<div class="sep" style="top:212.5px"></div>
<div class="t" style="left:135.90px;top:217.39px;font-size:8.7px;line-height:8.7px;color:#f8f8f8;transform-origin:0 0;transform:scaleX(0.925);-webkit-text-stroke:0.25px #f8f8f8;">Slice</div>
<div class="ar" style="top:218.6px"></div>
<div class="t" style="left:135.90px;top:227.79px;font-size:8.7px;line-height:8.7px;color:#f8f8f8;transform-origin:0 0;transform:scaleX(0.925);-webkit-text-stroke:0.25px #f8f8f8;">Create Trim Marks</div>
<div class="sep" style="top:240.9px"></div>
<div class="t" style="left:135.90px;top:245.79px;font-size:8.7px;line-height:8.7px;color:#f8f8f8;transform-origin:0 0;transform:scaleX(0.925);-webkit-text-stroke:0.25px #f8f8f8;">Path</div>
<div class="ar" style="top:247px"></div>
<div class="t" style="left:135.90px;top:256.19px;font-size:8.7px;line-height:8.7px;color:#f8f8f8;transform-origin:0 0;transform:scaleX(0.925);-webkit-text-stroke:0.25px #f8f8f8;">Shape</div>
<div class="ar" style="top:257.4px"></div>
<div class="t" style="left:135.90px;top:266.79px;font-size:8.7px;line-height:8.7px;color:#f8f8f8;transform-origin:0 0;transform:scaleX(0.925);-webkit-text-stroke:0.25px #f8f8f8;">Pattern</div>
<div class="ar" style="top:268px"></div>
<div class="t" style="left:135.90px;top:277.39px;font-size:8.7px;line-height:8.7px;color:#f8f8f8;transform-origin:0 0;transform:scaleX(0.925);-webkit-text-stroke:0.25px #f8f8f8;">Blend</div>
<div class="ar" style="top:278.6px"></div>
<div class="t" style="left:135.90px;top:287.99px;font-size:8.7px;line-height:8.7px;color:#f8f8f8;transform-origin:0 0;transform:scaleX(0.925);-webkit-text-stroke:0.25px #f8f8f8;">Envelope Distort</div>
<div class="ar" style="top:289.2px"></div>
<div class="t" style="left:135.90px;top:298.79px;font-size:8.7px;line-height:8.7px;color:#f8f8f8;transform-origin:0 0;transform:scaleX(0.925);-webkit-text-stroke:0.25px #f8f8f8;">Perspective</div>
<div class="ar" style="top:300px"></div>
<div class="t" style="left:135.90px;top:309.39px;font-size:8.7px;line-height:8.7px;color:#f8f8f8;transform-origin:0 0;transform:scaleX(0.925);-webkit-text-stroke:0.25px #f8f8f8;">Live Paint</div>
<div class="ar" style="top:310.6px"></div>
<div class="t" style="left:135.90px;top:320.19px;font-size:8.7px;line-height:8.7px;color:#f8f8f8;transform-origin:0 0;transform:scaleX(0.925);-webkit-text-stroke:0.25px #f8f8f8;">Image Trace</div>
<div class="ar" style="top:321.4px"></div>
<div class="t" style="left:135.90px;top:331.19px;font-size:8.7px;line-height:8.7px;color:#f8f8f8;transform-origin:0 0;transform:scaleX(0.925);-webkit-text-stroke:0.25px #f8f8f8;">Text Wrap</div>
<div class="ar" style="top:332.4px"></div>
<div class="t" style="left:135.90px;top:341.79px;font-size:8.7px;line-height:8.7px;color:#f8f8f8;transform-origin:0 0;transform:scaleX(0.925);-webkit-text-stroke:0.25px #f8f8f8;">Line and Sketch Art</div>
<div class="ar" style="top:343px"></div>
<div class="sep" style="top:354.5px"></div>
<div class="t" style="left:135.90px;top:359.19px;font-size:8.7px;line-height:8.7px;color:#f8f8f8;transform-origin:0 0;transform:scaleX(0.925);-webkit-text-stroke:0.25px #f8f8f8;">Clipping Mask</div>
<div class="ar" style="top:360.4px"></div>
<div class="t" style="left:135.90px;top:369.79px;font-size:8.7px;line-height:8.7px;color:#f8f8f8;transform-origin:0 0;transform:scaleX(0.925);-webkit-text-stroke:0.25px #f8f8f8;">Compound Path</div>
<div class="ar" style="top:371px"></div>
<div class="t" style="left:135.90px;top:380.39px;font-size:8.7px;line-height:8.7px;color:#f8f8f8;transform-origin:0 0;transform:scaleX(0.925);-webkit-text-stroke:0.25px #f8f8f8;">Artboards</div>
<div class="ar" style="top:381.6px"></div>
<div class="t" style="left:135.90px;top:391.19px;font-size:8.7px;line-height:8.7px;color:#f8f8f8;transform-origin:0 0;transform:scaleX(0.925);-webkit-text-stroke:0.25px #f8f8f8;">Graph</div>
<div class="ar" style="top:392.4px"></div>
<div class="sep" style="top:403.5px"></div>
<div class="t" style="left:135.90px;top:408.79px;font-size:8.7px;line-height:8.7px;color:#f8f8f8;transform-origin:0 0;transform:scaleX(0.925);-webkit-text-stroke:0.25px #f8f8f8;">Collect For Export</div>
<div class="ar" style="top:410px"></div>
<svg style="left:186px;top:163px" width="8" height="12"><path d="M0.8 0.8 V9.5 L2.8 7.6 L4.3 11 L5.8 10.3 L4.4 7.1 H7.2Z" fill="#111" stroke="#fff" stroke-width="0.9"/></svg>
<div class="a" style="left:721.2px;top:166.5px;width:175.6px;height:151.3px;background:#535353;border-radius:2px;box-shadow:0 1px 5px rgba(0,0,0,0.28)"></div>
<div class="a" style="left:721.5px;top:166.5px;width:175.3px;height:8.5px;background:#3d3d3d;border-radius:2px 2px 0 0"></div>
<svg style="left:725px;top:168.8px" width="5" height="5"><path d="M0.4 0.4 L4.6 4.6 M4.6 0.4 L0.4 4.6" stroke="#b8b8b8" stroke-width="0.9"/></svg>
<svg style="left:887.5px;top:169.5px" width="5" height="4"><path d="M2 0.3 L0.5 2 L2 3.7 M4.5 0.3 L3 2 L4.5 3.7" fill="none" stroke="#9a9a9a" stroke-width="0.8"/></svg>
<div class="a" style="left:721.5px;top:175px;width:175.3px;height:19.3px;background:#424242"></div>
<div class="a" style="left:753px;top:175px;width:1px;height:19.3px;background:#383838"></div>
<div class="a" style="left:808.5px;top:175px;width:46.5px;height:19.5px;background:#535353"></div>
<div class="t" style="left:727.70px;top:181.76px;font-size:7.6px;line-height:7.6px;color:#c8c8c8;transform-origin:0 0;transform:scaleX(1.080);-webkit-text-stroke:0.1px #c8c8c8;">Color</div>
<div class="t" style="left:760.60px;top:181.76px;font-size:7.6px;line-height:7.6px;color:#c8c8c8;transform-origin:0 0;transform:scaleX(1.039);-webkit-text-stroke:0.1px #c8c8c8;">Color Guide</div>
<div class="t" style="left:815.70px;top:181.76px;font-size:7.6px;line-height:7.6px;color:#f4f4f4;transform-origin:0 0;transform:scaleX(1.017);-webkit-text-stroke:0.2px #f4f4f4;">Swatches</div>
<svg style="left:885.3px;top:182.5px" width="8" height="6"><path d="M0 0.5H7.4M0 2.9H7.4M0 5.3H7.4" stroke="#a8a8a8" stroke-width="0.8"/></svg>
<div class="a" style="left:733px;top:206px;width:12.6px;height:13px;background:#000;border:1px solid #e6e6e6"></div><div class="a" style="left:736px;top:209px;width:5px;height:5px;border:1px solid #ddd;background:#333"></div>
<div class="a" style="left:725.8px;top:199.9px;width:13.2px;height:13px;background:#fff;border:0.5px solid #ccc"></div>
<svg style="left:862px;top:201px" width="9" height="12"><path d="M0 1H9M0 4H9M0 7H9M0 10H9" stroke="#bdbdbd" stroke-width="1.3"/></svg>
<div class="a" style="left:876px;top:200px;width:15.6px;height:14.7px;background:#2b2b2b"></div>
<svg style="left:879px;top:202.5px" width="10" height="10"><g fill="#eaeaea"><rect x="0" y="0" width="2.6" height="2.6"/><rect x="3.5" y="0" width="2.6" height="2.6"/><rect x="7" y="0" width="2.6" height="2.6"/><rect x="0" y="3.5" width="2.6" height="2.6"/><rect x="3.5" y="3.5" width="2.6" height="2.6"/><rect x="7" y="3.5" width="2.6" height="2.6"/><rect x="0" y="7" width="2.6" height="2.6"/><rect x="3.5" y="7" width="2.6" height="2.6"/><rect x="7" y="7" width="2.6" height="2.6"/></g></svg>
<div class="a" style="left:724.5px;top:222.5px;width:168px;height:74px;border:1px solid #5c5c5c"></div>
<div class="sw" style="left:725.8px;top:224.2px;width:8.7px;background:linear-gradient(135deg,#fff 42%,#e01a1a 42%,#e01a1a 58%,#fff 58%)"></div>
<div class="sw" style="left:735.5799999999999px;top:224.2px;width:8.7px;background:#eee"><svg style="left:1px;top:1px" width="7" height="7"><circle cx="3.5" cy="3.5" r="2.2" fill="none" stroke="#888" stroke-width="0.7"/><path d="M3.5 0V7M0 3.5H7" stroke="#888" stroke-width="0.7"/></svg></div>
<div class="sw" style="left:745.3599999999999px;top:224.2px;width:8.7px;background:#fff;border:1px solid #000"></div>
<div class="sw" style="left:755.14px;top:224.2px;width:8.7px;background:#000000"></div>
<div class="sw" style="left:764.92px;top:224.2px;width:8.7px;background:#ff0000"></div>
<div class="sw" style="left:774.6999999999999px;top:224.2px;width:8.7px;background:#ffff00"></div>
<div class="sw" style="left:784.4799999999999px;top:224.2px;width:8.7px;background:#00ff00"></div>
<div class="sw" style="left:794.26px;top:224.2px;width:8.7px;background:#00ffff"></div>
<div class="sw" style="left:804.04px;top:224.2px;width:8.7px;background:#2b1bff"></div>
<div class="sw" style="left:813.8199999999999px;top:224.2px;width:8.7px;background:#ff00ff"></div>
<div class="sw" style="left:823.5999999999999px;top:224.2px;width:8.7px;background:#d40b1e"></div>
<div class="sw" style="left:833.38px;top:224.2px;width:8.7px;background:#ff0a0a"></div>
<div class="sw" style="left:843.16px;top:224.2px;width:8.7px;background:#ff5a0f"></div>
<div class="sw" style="left:852.9399999999999px;top:224.2px;width:8.7px;background:#ff8f1a"></div>
<div class="sw" style="left:862.7199999999999px;top:224.2px;width:8.7px;background:#ffa51f"></div>
<div class="sw" style="left:872.5px;top:224.2px;width:8.7px;background:#ffe80a"></div>
<div class="sw" style="left:725.8px;top:234.0px;width:8.7px;background:#d4e61a"></div>
<div class="sw" style="left:735.5799999999999px;top:234.0px;width:8.7px;background:#66cc52"></div>
<div class="sw" style="left:745.3599999999999px;top:234.0px;width:8.7px;background:#00b353"></div>
<div class="sw" style="left:755.14px;top:234.0px;width:8.7px;background:#00a04f"></div>
<div class="sw" style="left:764.92px;top:234.0px;width:8.7px;background:#007f45"></div>
<div class="sw" style="left:774.6999999999999px;top:234.0px;width:8.7px;background:#00b88c"></div>
<div class="sw" style="left:784.4799999999999px;top:234.0px;width:8.7px;background:#0fb5ad"></div>
<div class="sw" style="left:794.26px;top:234.0px;width:8.7px;background:#1aa8e8"></div>
<div class="sw" style="left:804.04px;top:234.0px;width:8.7px;background:#1f7ad1"></div>
<div class="sw" style="left:813.8199999999999px;top:234.0px;width:8.7px;background:#3b2ea8"></div>
<div class="sw" style="left:823.5999999999999px;top:234.0px;width:8.7px;background:#2b0f80"></div>
<div class="sw" style="left:833.38px;top:234.0px;width:8.7px;background:#6a22a6"></div>
<div class="sw" style="left:843.16px;top:234.0px;width:8.7px;background:#9a1aa3"></div>
<div class="sw" style="left:852.9399999999999px;top:234.0px;width:8.7px;background:#b80f73"></div>
<div class="sw" style="left:862.7199999999999px;top:234.0px;width:8.7px;background:#e60f4f"></div>
<div class="sw" style="left:872.5px;top:234.0px;width:8.7px;background:#f5128a"></div>
<div class="sw" style="left:725.8px;top:243.8px;width:8.7px;background:#c9b19a"></div>
<div class="sw" style="left:735.5799999999999px;top:243.8px;width:8.7px;background:#a68f7c"></div>
<div class="sw" style="left:745.3599999999999px;top:243.8px;width:8.7px;background:#8a7263"></div>
<div class="sw" style="left:755.14px;top:243.8px;width:8.7px;background:#5e4e45"></div>
<div class="sw" style="left:764.92px;top:243.8px;width:8.7px;background:#c79866"></div>
<div class="sw" style="left:774.6999999999999px;top:243.8px;width:8.7px;background:#b8834e"></div>
<div class="sw" style="left:784.4799999999999px;top:243.8px;width:8.7px;background:#a2693a"></div>
<div class="sw" style="left:794.26px;top:243.8px;width:8.7px;background:#8c5a25"></div>
<div class="sw" style="left:804.04px;top:243.8px;width:8.7px;background:#7a3c12"></div>
<div class="sw" style="left:813.8199999999999px;top:243.8px;width:8.7px;background:#5c2c0c"></div>
<div class="sw" style="left:823.5999999999999px;top:243.8px;width:8.7px;background:linear-gradient(to right,#fff,#000)"></div>
<div class="sw" style="left:833.38px;top:243.8px;width:8.7px;background:linear-gradient(to right,#d8eefc,#1b84d6)"></div>
<div class="sw" style="left:843.16px;top:243.8px;width:8.7px;background:linear-gradient(to right,#f66bbb,#fde4f0)"></div>
<div class="sw" style="left:852.9399999999999px;top:243.8px;width:8.7px;background:radial-gradient(circle,#ffe08a 0,#ff8c1a 70%)"></div>
<div class="sw" style="left:862.7199999999999px;top:243.8px;width:8.7px;background:#ecebdc"></div>
<div class="sw" style="left:872.5px;top:243.8px;width:8.7px;background:repeating-linear-gradient(45deg,#2468b8 0 1.5px,#cfe0f5 1.5px 3px)"></div>
<div class="sw" style="left:725.8px;top:253.5px;width:8.7px;background:repeating-linear-gradient(45deg,#a8d8a0 0 1.5px,#e8f5e0 1.5px 3px)"></div>
<svg style="left:726.5px;top:266.5px" width="8" height="7"><path d="M0.3 1 H3 L3.8 2 H7.7 V6.5 H0.3Z" fill="#c8c8c8"/><path d="M0.3 2.5H7.7" stroke="#8a8a8a" stroke-width="0.5"/></svg>
<div class="sw" style="left:735.5799999999999px;top:265px;width:8.7px;background:#000000"></div>
<div class="sw" style="left:745.3599999999999px;top:265px;width:8.7px;background:#1c1c1c"></div>
<div class="sw" style="left:755.14px;top:265px;width:8.7px;background:#2e2e2e"></div>
<div class="sw" style="left:764.92px;top:265px;width:8.7px;background:#4a4a4a"></div>
<div class="sw" style="left:774.6999999999999px;top:265px;width:8.7px;background:#666666"></div>
<div class="sw" style="left:784.4799999999999px;top:265px;width:8.7px;background:#8a8a8a"></div>
<div class="sw" style="left:794.26px;top:265px;width:8.7px;background:#a1a1a1"></div>
<div class="sw" style="left:804.04px;top:265px;width:8.7px;background:#b9b9b9"></div>
<div class="sw" style="left:813.8199999999999px;top:265px;width:8.7px;background:#d0d0d0"></div>
<div class="sw" style="left:823.5999999999999px;top:265px;width:8.7px;background:#e4e4e4"></div>
<div class="sw" style="left:833.38px;top:265px;width:8.7px;background:#f4f4f4"></div>
<svg style="left:726.5px;top:277.7px" width="8" height="7"><path d="M0.3 1 H3 L3.8 2 H7.7 V6.5 H0.3Z" fill="#c8c8c8"/><path d="M0.3 2.5H7.7" stroke="#8a8a8a" stroke-width="0.5"/></svg>
<div class="sw" style="left:735.5799999999999px;top:276.2px;width:8.7px;background:#28a8ee"></div>
<div class="sw" style="left:745.3599999999999px;top:276.2px;width:8.7px;background:#3fcf4a"></div>
<div class="sw" style="left:755.14px;top:276.2px;width:8.7px;background:#ff9a1a"></div>
<div class="sw" style="left:764.92px;top:276.2px;width:8.7px;background:#ff1414"></div>
<div class="sw" style="left:774.6999999999999px;top:276.2px;width:8.7px;background:#ff5aa6"></div>
<div class="sw" style="left:784.4799999999999px;top:276.2px;width:8.7px;background:#c2d8e6"></div>
<svg style="left:728px;top:300px" width="150" height="11"><g fill="#b8b8b8">
<rect x="0" y="2" width="1.5" height="7"/><rect x="2.3" y="1" width="1.5" height="8"/><path d="M4.5 2 L6 1.5 L7.8 8.6 L6.3 9Z"/><rect x="8.5" y="8" width="2" height="1"/>
<circle cx="22" cy="5.5" r="1.3"/><circle cx="25.5" cy="2.5" r="1.3"/><circle cx="25.5" cy="8.5" r="1.3"/><path d="M22 5.5 L25.5 2.5 M22 5.5 L25.5 8.5" stroke="#b8b8b8" stroke-width="0.8"/>
<path d="M37 9 H49 Q51 9 51 7 Q51 5 49 5 Q48.5 2 45.5 2 Q43 2 42 4 Q39.5 4 39.5 6.3 H37Z"/>
<rect x="67" y="1" width="10" height="8" fill="none" stroke="#b8b8b8" stroke-width="0.9"/><rect x="69" y="3" width="4" height="4"/><path d="M75.5 8.5 L77 10 L78.5 8.5Z"/>
<rect x="86" y="1" width="9" height="8.5" fill="none" stroke="#b8b8b8" stroke-width="0.9"/><rect x="88" y="4.5" width="5" height="3" fill="none" stroke="#b8b8b8" stroke-width="0.6"/>
<path d="M104 2 H108 L109 3 H113.5 V9.5 H104Z"/>
<path d="M123 2 H131 V9.5 H127 L125 8 H123Z"/>
<rect x="141" y="2.5" width="8" height="7" fill="none" stroke="#b8b8b8" stroke-width="0.9"/><path d="M140 1.5 H150 M143.5 4 V8.5 M146.5 4 V8.5" stroke="#b8b8b8" stroke-width="0.8"/>
</g></svg>
<div class="a" style="left:721.2px;top:312.3px;width:175.6px;height:5.5px;background:#4a4a4a;border-top:1.2px solid #383838;border-bottom:0.8px solid #404040"></div>
<div class="a" style="left:803px;top:314px;width:12px;height:2.5px;background:repeating-linear-gradient(to right,#6a6a6a 0 1px,transparent 1px 2px)"></div>
<div class="a" style="left:0;top:0;width:1024px;height:1px;background:#7f7f7f"></div>
<div class="a" style="left:0;top:1px;width:1024px;height:2px;background:#fff"></div>
<div class="a" style="left:4px;top:3px;width:1016px;height:1px;background:#a0a0a0"></div>
<div class="a" style="left:4px;top:4px;width:1016px;height:1px;background:#4d4d4d"></div>
<div class="a" style="left:0;top:0;width:1px;height:599px;background:#7f7f7f"></div>
<div class="a" style="left:1px;top:1px;width:3px;height:598px;background:#fff"></div>
<div class="a" style="left:4px;top:4px;width:1px;height:593px;background:#474747"></div>
<div class="a" style="left:1019px;top:4px;width:1px;height:593px;background:#444"></div>
<div class="a" style="left:1020px;top:1px;width:3px;height:598px;background:#fff"></div>
<div class="a" style="left:1022px;top:1px;width:1px;height:598px;background:#c0c0c0"></div>
<div class="a" style="left:1023px;top:0;width:1px;height:599px;background:#808080"></div>
<div class="a" style="left:4px;top:596px;width:1016px;height:1px;background:#4f4f4f"></div>
<div class="a" style="left:1px;top:597px;width:1022px;height:1px;background:#fff"></div>
<div class="a" style="left:0;top:598px;width:1024px;height:1px;background:#909090"></div>
<div class="a" style="left:123.2px;top:3px;width:34.8px;height:1px;background:#a8c8f4"></div><div class="a" style="left:123.2px;top:4px;width:34.8px;height:1px;background:#2c7ff0"></div>
</body></html>
